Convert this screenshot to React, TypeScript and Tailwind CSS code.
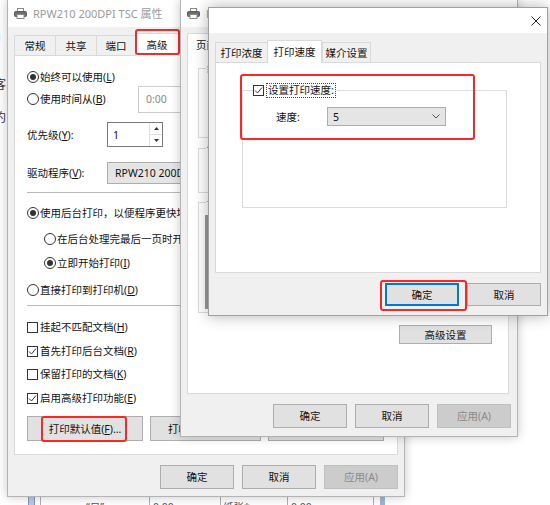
import type { ReactNode } from 'react';

function PrinterIcon() {
  return (
    <svg width="13" height="11" viewBox="0 0 13 11">
      <rect x="3.5" y="0.5" width="6" height="3" fill="#fff" stroke="#8a8a8a" />
      <rect x="0.5" y="3.5" width="12" height="5" rx="1" fill="#6e6e6e" stroke="#5c5c5c" />
      <rect x="3" y="6.5" width="7" height="4" fill="#fff" stroke="#8a8a8a" />
    </svg>
  );
}

function TitleBar({ title, icon, close }: { title?: string; icon?: boolean; close?: boolean }) {
  return (
    <div className="flex h-[27px] shrink-0 items-center bg-white pl-[6px] pr-[7px]">
      {icon && <PrinterIcon />}
      {title && (
        <span className="ml-[6px] whitespace-nowrap text-[11px] text-[#9a9a9a]">{title}</span>
      )}
      {close && (
        <svg className="ml-auto" width="10" height="10" viewBox="0 0 10 10">
          <path d="M0.5 0.5 L9.5 9.5 M9.5 0.5 L0.5 9.5" stroke="#222" strokeWidth="1" />
        </svg>
      )}
    </div>
  );
}

function Tab({ label, active, w }: { label: string; active?: boolean; w: string }) {
  if (active) {
    return (
      <div
        className={`relative z-10 -mb-px flex h-[23px] shrink-0 items-center justify-center border border-b-0 border-[#d9d9d9] bg-white ${w}`}
      >
        {label}
      </div>
    );
  }
  return (
    <div
      className={`-mr-px flex h-[20px] shrink-0 items-center justify-center border border-b-0 border-[#d9d9d9] bg-[#f0f0f0] ${w}`}
    >
      {label}
    </div>
  );
}

function Radio({ checked, children }: { checked?: boolean; children: ReactNode }) {
  return (
    <div className="flex items-center gap-[1px] whitespace-nowrap">
      <span className="flex h-[12px] w-[12px] shrink-0 items-center justify-center rounded-full border border-[#333] bg-white">
        {checked && <span className="h-[6px] w-[6px] rounded-full bg-[#333]" />}
      </span>
      <span>{children}</span>
    </div>
  );
}

function Check({ checked, children }: { checked?: boolean; children: ReactNode }) {
  return (
    <div className="flex items-center gap-[2px] whitespace-nowrap">
      <span className="flex h-[11px] w-[11px] shrink-0 items-center justify-center border border-[#333] bg-white">
        {checked && (
          <svg width="9" height="9" viewBox="0 0 9 9">
            <path d="M1 4.5 L3.5 7 L8 1.5" fill="none" stroke="#333" strokeWidth="1" />
          </svg>
        )}
      </span>
      <span>{children}</span>
    </div>
  );
}

function Btn({
  children,
  w,
  h = 'h-[24px]',
  disabled,
  focused,
}: {
  children: ReactNode;
  w: string;
  h?: string;
  disabled?: boolean;
  focused?: boolean;
}) {
  const tone = disabled
    ? 'border border-[#bfbfbf] bg-[#cccccc] text-[#8a8a8a]'
    : focused
      ? 'border-2 border-[#0078d7] bg-[#e1e1e1]'
      : 'border border-[#adadad] bg-[#e1e1e1]';
  return (
    <div className={`flex shrink-0 items-center justify-center whitespace-nowrap ${w} ${h} ${tone}`}>
      {children}
    </div>
  );
}

function RedBox({ className }: { className: string }) {
  return <div className={`pointer-events-none absolute z-20 rounded-[3px] border-2 border-[#f42a2a] ${className}`} />;
}

function GroupBox({ legend, h, children }: { legend: string; h: string; children?: ReactNode }) {
  return (
    <div className={`relative w-full shrink-0 border border-[#dcdcdc] ${h}`}>
      <span className="absolute left-[7px] top-[-8px] bg-white px-[1px]">{legend}</span>
      {children}
    </div>
  );
}

function BackWindow() {
  return (
    <>
      <span className="absolute left-[-3px] top-[30px] text-[12px] font-bold text-[#333]">i</span>
      <span className="absolute left-[-6px] top-[78px] text-[12px] text-[#333]">客</span>
      <span className="absolute left-[-6px] top-[111px] text-[12px] text-[#333]">约</span>
      <div className="absolute left-[28px] top-[496px] flex h-[20px] w-[358px] text-[#555]">
        <div className="w-[7px] border border-[#7d97c4] bg-[#b9c9e6]" />
        <div className="ml-[5px] flex w-[109px] justify-center border-l border-[#b0b0b0] pt-[4px]">“日”</div>
        <div className="flex w-[71px] border-l border-[#b0b0b0] pl-[3px] pt-[4px]">0.00</div>
        <div className="flex w-[67px] border-l border-[#b0b0b0] pl-[2px] pt-[4px]">纸张*</div>
        <div className="flex w-[86px] border-l border-[#b0b0b0] pl-[3px] pt-[4px]">0.00</div>
        <div className="w-[7px] border-l border-[#b0b0b0]" />
        <div className="w-[5px] bg-[#9fb4d8]" />
      </div>
    </>
  );
}

function AdvancedWindow() {
  return (
    <div className="absolute isolate z-[1] left-[7px] top-[-1px] flex h-[498px] w-[398px] flex-col border border-[#b4b4b4] bg-[#f0f0f0] shadow-[0_0_10px_rgba(0,0,0,0.22)]">
      <TitleBar icon title="RPW210 200DPI TSC 属性" />
      <div className="flex flex-col px-[6px] pt-[6px]">
        <div className="flex h-[22px] items-end">
          <Tab label="常规" w="w-[42px]" />
          <Tab label="共享" w="w-[42px]" />
          <Tab label="端口" w="w-[40px]" />
          <Tab label="高级" active w="w-[44px]" />
        </div>
        <div className="flex h-[400px] flex-col overflow-hidden border border-[#d9d9d9] bg-white pl-[12px] pr-[12px] pt-[10px]">
          <div className="flex h-[22px] items-center">
            <Radio checked>
              始终可以使用(<u>L</u>)
            </Radio>
          </div>
          <div className="flex h-[22px] items-center">
            <div className="w-[111px]">
              <Radio>
                使用时间从(<u>B</u>)
              </Radio>
            </div>
            <div className="flex h-[27px] w-[90px] shrink-0 items-center border border-[#cccccc] bg-white pl-[7px] text-[#8a8a8a]">
              0:00
            </div>
          </div>
          <div className="mt-[13px] flex h-[23px] items-center">
            <span className="w-[80px] shrink-0">
              优先级(<u>Y</u>):
            </span>
            <div className="flex h-[25px] w-[56px] shrink-0 items-center border border-[#7a7a7a] bg-white pl-[5px]">
              <span className="flex-1">1</span>
              <div className="flex h-full w-[13px] flex-col border-l border-[#e0e0e0]">
                <div className="flex flex-1 items-center justify-center">
                  <svg width="5" height="3" viewBox="0 0 5 3">
                    <path d="M0 3 L2.5 0 L5 3 Z" fill="#333" />
                  </svg>
                </div>
                <div className="flex flex-1 items-center justify-center border-t border-[#e0e0e0]">
                  <svg width="5" height="3" viewBox="0 0 5 3">
                    <path d="M0 0 L2.5 3 L5 0 Z" fill="#333" />
                  </svg>
                </div>
              </div>
            </div>
          </div>
          <div className="mt-[16px] flex h-[22px] items-center">
            <span className="w-[80px] shrink-0">
              驱动程序(<u>V</u>):
            </span>
            <div className="flex h-[22px] w-[200px] shrink-0 items-center border border-[#adadad] bg-[#e5e5e5] pl-[7px]">
              RPW210 200DPI TSC
            </div>
          </div>
          <div className="mt-[8px] h-px shrink-0 bg-[#b9b9b9]" />
          <div className="mt-[9px] flex h-[22px] items-center">
            <Radio checked>使用后台打印，以便程序更快地结束打印(S)</Radio>
          </div>
          <div className="mt-[4px] flex h-[22px] items-center pl-[17px]">
            <Radio>在后台处理完最后一页时开始打印(T)</Radio>
          </div>
          <div className="mt-[2px] flex h-[22px] items-center pl-[17px]">
            <Radio checked>
              立即开始打印(<u>I</u>)
            </Radio>
          </div>
          <div className="mt-[5px] flex h-[22px] items-center">
            <Radio>
              直接打印到打印机(<u>D</u>)
            </Radio>
          </div>
          <div className="mt-[4px] h-px shrink-0 bg-[#b9b9b9]" />
          <div className="mt-[10px] flex h-[22px] items-center">
            <Check>
              挂起不匹配文档(<u>H</u>)
            </Check>
          </div>
          <div className="mt-[2px] flex h-[22px] items-center">
            <Check checked>
              首先打印后台文档(<u>R</u>)
            </Check>
          </div>
          <div className="mt-[1px] flex h-[22px] items-center">
            <Check>
              保留打印的文档(<u>K</u>)
            </Check>
          </div>
          <div className="mt-[2px] flex h-[22px] items-center">
            <Check checked>
              启用高级打印功能(<u>E</u>)
            </Check>
          </div>
          <div className="mt-[7px] flex gap-[7px]">
            <Btn w="w-[116px]" h="h-[25px]">
              打印默认值(<u>F</u>)...
            </Btn>
            <Btn w="w-[111px]" h="h-[25px]">
              打印处理器(<u>N</u>)...
            </Btn>
            <Btn w="w-[116px]" h="h-[25px]">
              分隔页(<u>O</u>)...
            </Btn>
          </div>
        </div>
        <div className="mt-[10px] flex justify-end gap-[8px]">
          <Btn w="w-[74px]">确定</Btn>
          <Btn w="w-[74px]">取消</Btn>
          <Btn w="w-[74px]" disabled>
            应用(A)
          </Btn>
        </div>
      </div>
      <RedBox className="left-[127px] top-[29px] h-[26px] w-[45px]" />
      <RedBox className="left-[33px] top-[416px] h-[26px] w-[86px]" />
    </div>
  );
}

function DocumentWindow() {
  return (
    <div className="absolute isolate z-[2] left-[180px] top-[-1px] flex h-[438px] w-[338px] flex-col border border-[#b4b4b4] bg-[#f0f0f0] shadow-[0_0_10px_rgba(0,0,0,0.22)]">
      <TitleBar icon title="RPW210 200DPI TSC 文档属性" />
      <div className="flex flex-col px-[6px] pt-[6px]">
        <div className="flex h-[22px] items-end">
          <Tab label="页面设置" active w="w-[60px]" />
          <Tab label="图形" w="w-[44px]" />
        </div>
        <div className="flex h-[339px] w-[322px] flex-col border border-[#d9d9d9] bg-white px-[10px] pt-[12px]">
          <GroupBox legend="纸张选项" h="h-[70px]" />
          <div className="mt-[10px]">
            <GroupBox legend="份数" h="h-[45px]" />
          </div>
          <div className="mt-[9px]">
            <GroupBox legend="调整" h="h-[111px]">
              <div className="ml-[6px] mt-[12px] h-[94px] w-[180px] border border-l-[3px] border-[#9a9a9a] bg-white" />
            </GroupBox>
          </div>
          <div className="mr-[6px] mt-[12px] self-end">
            <Btn w="w-[93px]" h="h-[19px]">
              高级设置
            </Btn>
          </div>
        </div>
        <div className="mt-[10px] flex justify-end gap-[8px]">
          <Btn w="w-[74px]">确定</Btn>
          <Btn w="w-[74px]">取消</Btn>
          <Btn w="w-[74px]" disabled>
            应用(A)
          </Btn>
        </div>
      </div>
    </div>
  );
}

function SpeedWindow() {
  return (
    <div className="absolute isolate z-[3] left-[208px] top-[7px] flex h-[309px] w-[340px] flex-col border border-[#a0a0a0] bg-[#f0f0f0] shadow-[0_0_14px_rgba(0,0,0,0.3)]">
      <div className="flex h-[25px] shrink-0 items-center justify-end bg-white pr-[6px]">
        <svg width="10" height="10" viewBox="0 0 10 10">
          <path d="M0.5 0.5 L9.5 9.5 M9.5 0.5 L0.5 9.5" stroke="#222" strokeWidth="1" />
        </svg>
      </div>
      <div className="flex flex-col px-[6px] pt-[6px]">
        <div className="flex h-[23px] items-end">
          <Tab label="打印浓度" w="w-[53px]" />
          <Tab label="打印速度" active w="w-[55px]" />
          <Tab label="媒介设置" w="w-[49px]" />
        </div>
        <div className="h-[211px] border border-[#d9d9d9] bg-white pl-[26px] pt-[27px]">
          <div className="relative h-[118px] w-[265px] border border-[#dcdcdc]">
            <div className="absolute left-[10px] top-[-8px] flex items-center gap-[2px] bg-white pr-[1px]">
              <span className="flex h-[11px] w-[11px] shrink-0 items-center justify-center border border-[#333] bg-white">
                <svg width="9" height="9" viewBox="0 0 9 9">
                  <path d="M1 4.5 L3.5 7 L8 1.5" fill="none" stroke="#333" strokeWidth="1" />
                </svg>
              </span>
              <span className="border border-dotted border-[#444] px-[1px] leading-[13px]">设置打印速度:</span>
            </div>
            <div className="mt-[16px] flex h-[19px] items-center pl-[33px]">
              <span className="w-[51px] shrink-0">速度:</span>
              <div className="flex h-[19px] w-[119px] items-center border border-[#adadad] bg-[#e5e5e5] pl-[5px] pr-[5px]">
                <span className="flex-1">5</span>
                <svg width="8" height="5" viewBox="0 0 8 5">
                  <path d="M0.5 0.5 L4 4 L7.5 0.5" fill="none" stroke="#555" strokeWidth="1" />
                </svg>
              </div>
            </div>
          </div>
        </div>
        <div className="mt-[10px] flex justify-end gap-[8px]">
          <Btn w="w-[74px]" h="h-[23px]" focused>
            确定
          </Btn>
          <Btn w="w-[74px]" h="h-[23px]">
            取消
          </Btn>
        </div>
      </div>
      <RedBox className="left-[31px] top-[66px] h-[66px] w-[235px]" />
      <RedBox className="left-[171px] top-[272px] h-[31px] w-[87px]" />
    </div>
  );
}

export default function App() {
  return (
    <div className="relative h-[505px] w-[550px] overflow-hidden bg-white font-['Noto_Sans','Noto_Sans_CJK_SC',sans-serif] text-[10.5px] leading-[14px] text-[#111]">
      <BackWindow />
      <AdvancedWindow />
      <DocumentWindow />
      <SpeedWindow />
    </div>
  );
}
